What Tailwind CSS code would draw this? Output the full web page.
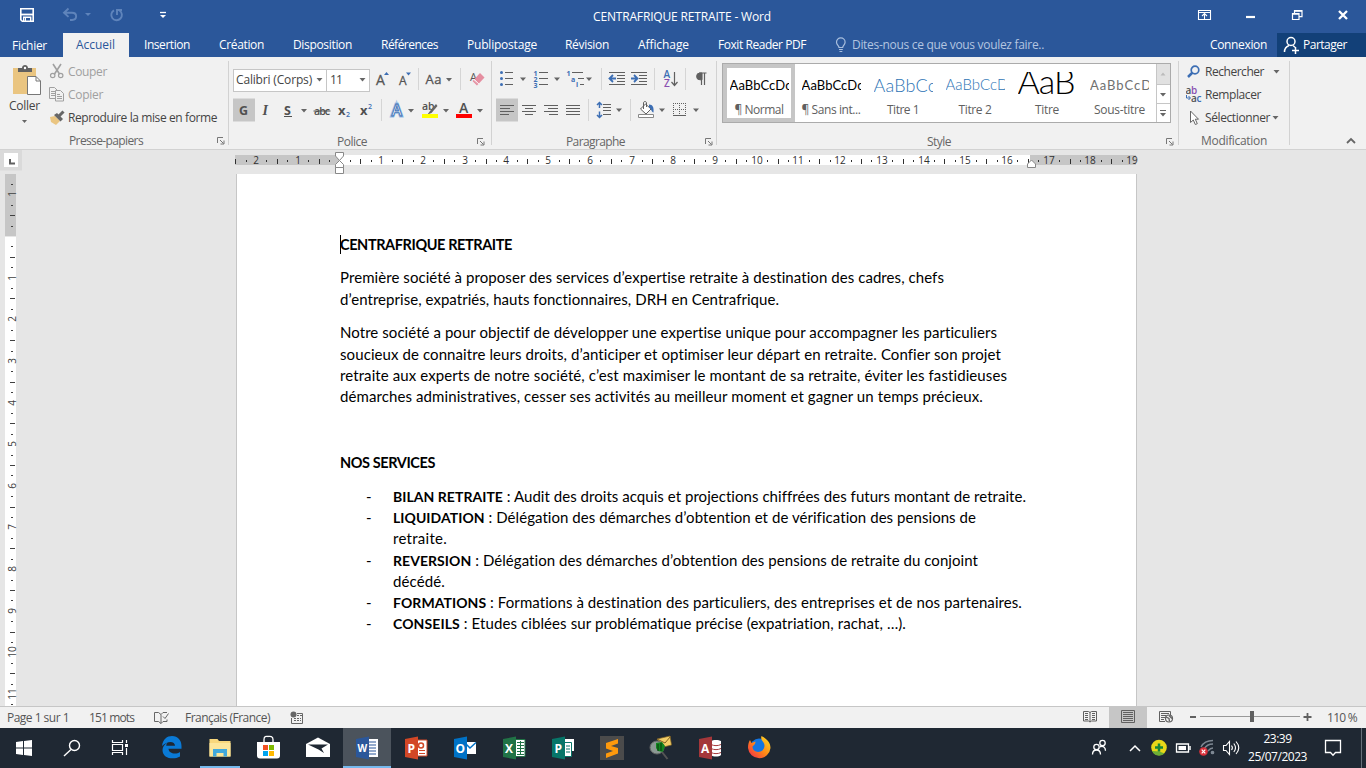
<!DOCTYPE html>
<html lang="fr">
<head>
<meta charset="utf-8">
<title>CENTRAFRIQUE RETRAITE - Word</title>
<script src="https://cdn.jsdelivr.net/npm/@tailwindcss/browser@4"></script>
</head>
<body class="w-[1366px] h-[768px] overflow-hidden flex flex-col bg-[#e6e6e6] font-['Open_Sans','Noto_Sans',sans-serif] text-[12px] leading-[16px] text-[#444444]">

<!-- Title bar -->
<header class="h-[33px] shrink-0 bg-[#2b579a] flex items-center text-white">
  <svg class="block shrink-0" width="593" height="33" viewBox="0 0 593 33" fill="none">
    <path d="M20.800 8.800h12.400v12.400h-10.900l-1.500-1.500z" stroke="#fff" stroke-width="1.600"/><path d="M21 14.500h12" stroke="#fff" stroke-width="1.800"/><path d="M23.700 21.500v-4.200h7v4.200" stroke="#fff" stroke-width="1.400"/><path d="M25.500 18v3.500" stroke="#fff"/>
    <g stroke="#5f84bb" stroke-width="1.900"><path d="M68.500 8.500l-4.500 4.200 4.500 4.200M64.500 12.700h7.500c5.500 0 5.500 7 0 7.300h-2"/><path d="M119.500 10.500a5.300 5.300 0 1 1-5.500-.2M117 15v-5h5"/></g>
    <path d="M85 13h6l-3 3z" fill="#5f84bb"/><path d="M160 12.500h6" stroke="#fff" stroke-width="1.300"/><path d="M160 15h6l-3 3z" fill="#fff"/>
  </svg>
  <span class="fit w-[178px] shrink-0 whitespace-nowrap">CENTRAFRIQUE RETRAITE - Word</span>
  <svg class="block shrink-0 ml-[419px]" width="176" height="33" viewBox="1190 0 176 33" fill="none" stroke="#fff">
    <path d="M1198.500 10.500h12v9h-12zM1198.500 12.500h12M1204.500 19v-5M1202 16l2.500-2.500L1207 16" stroke-width="1.100"/>
    <path d="M1246 17h9" stroke-width="2.200"/>
    <path d="M1292.500 13.500h6.500v6h-6.500zM1294.500 13v-2.300h7.500v6h-2.500" stroke-width="1.200"/><path d="M1292 14h7M1294 11h8" stroke-width="1.600"/>
    <path d="M1339 11l8 8M1347 11l-8 8" stroke-width="2.300"/>
  </svg>
</header>

<!-- Ribbon tabs -->
<nav class="h-[24px] shrink-0 bg-[#2b579a] flex items-center text-white whitespace-nowrap">
  <span class="fit ml-[12px] w-[35px] shrink-0 pt-[2px]">Fichier</span>
  <span class="ml-[16px] w-[66px] h-full shrink-0 bg-[#f1f1f1] flex items-center pl-[13px] text-[#2b579a]"><span class="fit w-[39px]">Accueil</span></span>
  <span class="fit ml-[15px] w-[46px] shrink-0">Insertion</span>
  <span class="fit ml-[29px] w-[45px] shrink-0">Création</span>
  <span class="fit ml-[29px] w-[59px] shrink-0">Disposition</span>
  <span class="fit ml-[29px] w-[57px] shrink-0">Références</span>
  <span class="fit ml-[29px] w-[70px] shrink-0">Publipostage</span>
  <span class="fit ml-[28px] w-[44px] shrink-0">Révision</span>
  <span class="fit ml-[29px] w-[51px] shrink-0">Affichage</span>
  <span class="fit ml-[29px] w-[88px] shrink-0">Foxit Reader PDF</span>
  <svg class="block shrink-0 ml-[29px]" width="12" height="16" viewBox="0 0 12 16" fill="none" stroke="#a9bfde" stroke-width="1.200"><path d="M4 10.500C4 8.500 1.500 8 1.500 5.200a4.300 4.300 0 0 1 8.600 0C10 8 7.700 8.500 7.700 10.500zM4 12.500h3.800M4.500 14.500h2.800"/></svg>
  <span class="fit ml-[5px] w-[192px] shrink-0 text-[#b3c5e0]">Dites-nous ce que vous voulez faire..</span>
  <span class="fit ml-[166px] w-[57px] shrink-0">Connexion</span>
  <span class="ml-[10px] w-[89px] h-full shrink-0 bg-[#124078] flex items-center">
    <svg class="block shrink-0 ml-[6px]" width="18" height="20" viewBox="1283 35 18 20" fill="none" stroke="#fff" stroke-width="1.500"><circle cx="1291" cy="41.500" r="4"/><path d="M1284.500 52c0-3.500 2-5.500 4.500-6.500M1293 45.500l2 1.700M1295.500 47v7M1292 50.500h7"/></svg>
    <span class="fit ml-[2px] w-[44px]">Partager</span>
  </span>
</nav>

<!-- Ribbon -->
<section class="h-[93px] shrink-0 bg-[#f1f1f1] border-b border-[#d2d2d2] flex whitespace-nowrap">

  <!-- Presse-papiers -->
  <div class="w-[228px] shrink-0 flex flex-col">
    <div class="h-[77px] flex">
      <div class="w-[49px] flex flex-col">
        <svg class="block" width="49" height="41" viewBox="0 57 49 41"><path d="M13 68h23v26H13z" fill="#eac581"/><path d="M18 72v-4h4c0-4 6-4 6 0h4v4z" fill="#606060"/><circle cx="25" cy="68" r="1.200" fill="#fff"/><path d="M27.500 76.500h8.500l4.500 4.500v13.500h-13z" fill="#fff" stroke="#777"/><path d="M36 76.500v4.500h4.500" fill="none" stroke="#777"/></svg>
        <span class="fit ml-[9px] w-[31px]">Coller</span>
        <svg class="block mt-[3px]" width="49" height="8" viewBox="0 0 49 8"><path d="M22 3h5l-2.500 3z" fill="#666"/></svg>
      </div>
      <div class="flex flex-col pt-[4px] text-[#a0a0a0]">
        <div class="h-[22px] flex items-center"><svg class="block mr-[3px]" width="16" height="18" viewBox="49 63 16 18" fill="none" stroke="#a0a0a0" stroke-width="1.600"><path d="M53 64l6.500 10M61 64l-6.500 10"/><circle cx="52.700" cy="75.500" r="2.200" stroke-width="1.200"/><circle cx="60.700" cy="75.500" r="2.200" stroke-width="1.200"/></svg><span class="fit w-[39px]">Couper</span></div>
        <div class="h-[24px] flex items-center"><svg class="block mr-[3px]" width="16" height="16" viewBox="49 87 16 16" fill="#f1f1f1" stroke="#a0a0a0"><path d="M49.500 87.500h5l2.500 2.500v8.500h-7.500zM51 91.500h4M51 93.500h4M51 95.500h4"/><path d="M55.500 90.500h5l3 3v7.500h-8zM57 94.500h3M57 96.500h5M57 98.500h5"/></svg><span class="fit w-[35px]">Copier</span></div>
        <div class="h-[22px] flex items-center text-[#444]"><svg class="block mr-[3px]" width="16" height="16" viewBox="49 110 16 16"><path d="M50 117l5-1 5 5-4 4-5-3z" fill="#eac581"/><path d="M54 115l3-2 6 6-2.500 2.500z" fill="#666"/><path d="M59 116l4.500-4.500" stroke="#666" stroke-width="3"/></svg><span class="fit w-[149px]">Reproduire la mise en forme</span></div>
      </div>
    </div>
    <div class="h-[16px] flex items-center text-[#666] pl-[69px]"><span class="fit w-[74px]">Presse-papiers</span>
      <svg class="block ml-[74px]" width="8" height="8" viewBox="0 0 8 8" fill="none" stroke="#777"><path d="M.5 6V.5H6M3 3l3.500 3.500M7 3.500V7H3.500"/></svg></div>
  </div>
  <div class="w-px h-[84px] mt-[4px] bg-[#d2d2d2] shrink-0"></div>

  <!-- Police -->
  <div class="w-[262px] shrink-0 flex flex-col pt-[11px]">
    <div class="h-[24px] flex items-center">
      <div class="ml-[4px] w-[94px] h-[23px] border border-[#c6c6c6] bg-white flex items-center pl-[2px]"><span class="fit w-[76px]">Calibri (Corps)</span><svg class="block ml-[4px]" width="7" height="4" viewBox="0 0 7 4"><path d="M.5 0h6l-3 3.500z" fill="#666"/></svg></div>
      <div class="w-[43px] h-[23px] border border-l-0 border-[#c6c6c6] bg-white flex items-center pl-[3px]"><span class="fit w-[12px]">11</span><svg class="block ml-[17px]" width="7" height="4" viewBox="0 0 7 4"><path d="M.5 0h6l-3 3.500z" fill="#666"/></svg></div>
      <svg class="block shrink-0" width="121" height="24" viewBox="370 68 121 24" font-family="Open Sans">
        <g fill="#555" stroke="#555" stroke-width=".3"><text x="376" y="85" font-size="14">A</text><text x="399" y="85" font-size="12">A</text><text x="425.500" y="84" font-size="13" textLength="16">Aa</text></g>
        <path d="M384 75h5l-2.500-3zM406 72.500h5l-2.500 3z" fill="#3c6eb4"/><path d="M446 78h6l-3 3.500z" fill="#666"/><path d="M418.500 68v22M460.500 68v22" stroke="#d5d5d5"/>
        <text x="470" y="81" font-size="11" fill="#555">A</text><path d="M474 79.500l6-6.500 4.500 4.500-6.500 7z" fill="#e58ea0"/><path d="M473 80.500l4.500 4.500" stroke="#e58ea0" stroke-width="1.500"/><path d="M474 79l5 5" stroke="#fff" stroke-width=".8"/>
      </svg>
    </div>
    <div class="h-[24px] mt-[6px] flex items-center">
      <svg class="block shrink-0 ml-[4px]" width="258" height="24" viewBox="233 98 258 24" font-family="Open Sans" fill="#505050">
        <path d="M233 98.500h22v23h-22z" fill="#c6c6c6"/>
        <text x="239" y="114.500" font-size="12.500" font-weight="700">G</text>
        <text x="262.500" y="115" font-size="14" font-style="italic" font-weight="700" font-family="Liberation Serif">I</text>
        <text x="284" y="114.500" font-size="12.500" font-weight="700">S</text><path d="M284 116.500h8" stroke="#505050"/>
        <path d="M301 109h6l-3 3.500zM408 109h6l-3 3.500zM443 109h6l-3 3.500zM477 109h6l-3 3.500z" fill="#666"/>
        <text x="314" y="114.500" font-size="10.500" font-weight="600" textLength="16">abc</text><path d="M313.500 111h17" stroke="#505050"/>
        <text x="338" y="114.500" font-size="13" font-weight="700">x</text><text x="346" y="117" font-size="7" fill="#3c6eb4" font-weight="600">2</text>
        <text x="360" y="114.500" font-size="13" font-weight="700">x</text><text x="368" y="109" font-size="7" fill="#3c6eb4" font-weight="600">2</text>
        <path d="M381.500 99v22" stroke="#d5d5d5"/>
        <text x="391.500" y="115.500" font-size="16" fill="#fff" stroke="#9ac0e6" stroke-width="3">A</text><text x="391.500" y="115.500" font-size="16" font-weight="600" fill="#fff" stroke="#3c6eb4" stroke-width=".9">A</text>
        <text x="422" y="110" font-size="10.500" font-weight="600">ab</text><path d="M436 104l-6 7-2.500 3.500 4-1.500 6-7z" fill="#666"/><path d="M422 114h16v4h-16z" fill="#ff0"/>
        <text x="459" y="112.500" font-size="14" font-weight="600">A</text><path d="M456 114h16v4h-16z" fill="#f00"/>
      </svg>
    </div>
    <div class="h-[16px] mt-[12px] flex items-center text-[#666] pl-[108px]"><span class="fit w-[30px]">Police</span>
      <svg class="block ml-[110px]" width="8" height="8" viewBox="0 0 8 8" fill="none" stroke="#777"><path d="M.5 6V.5H6M3 3l3.500 3.500M7 3.500V7H3.500"/></svg></div>
  </div>
  <div class="w-px h-[84px] mt-[4px] bg-[#d2d2d2] shrink-0"></div>

  <!-- Paragraphe -->
  <div class="w-[224px] shrink-0 flex flex-col pt-[11px]">
    <svg class="block shrink-0" width="224" height="24" viewBox="492 68 224 24" font-family="Open Sans" fill="none" stroke="#606060">
      <path d="M505 72.500h8M505 78.500h8M505 84.500h8M539 72.500h9M539 78.500h9M539 84.500h9M572 72.500h11M578 78.500h6M580 84.500h4"/>
      <g fill="#3c6eb4" stroke="none"><circle cx="501.500" cy="72.500" r="1.500"/><circle cx="501.500" cy="78.500" r="1.500"/><circle cx="501.500" cy="84.500" r="1.500"/>
      <g font-size="7" font-weight="700"><text x="533.500" y="75.500">1</text><text x="533.500" y="81.500">2</text><text x="533.500" y="87.500">3</text><text x="566.500" y="75.500">1</text><text x="571" y="81.500">a</text><text x="576" y="87">i</text></g></g>
      <path d="M520 77.500h6l-3 3.500zM554 77.500h6l-3 3.500zM586 77.500h6l-3 3.500z" fill="#666" stroke="none"/>
      <path d="M601.500 68v22M654.500 68v22M685.500 68v22" stroke="#d5d5d5"/>
      <path d="M609 72.500h16M617 75.500h8M617 78.500h8M617 81.500h8M609 84.500h16M631 72.500h16M639 75.500h8M639 78.500h8M639 81.500h8M631 84.500h16"/>
      <path d="M616 78.500h-6M613 75l-3.500 3.500 3.500 3.500M631 78.500h6M634 75l3.500 3.500-3.500 3.500" stroke="#3c6eb4" stroke-width="1.800"/>
      <g stroke="none" font-size="10" font-weight="600"><text x="663.500" y="77.500" fill="#3c6eb4">A</text><text x="664" y="86.500" fill="#8a4fb0">Z</text></g><path d="M674.500 72v13M671.500 82l3 3.500 3-3.500" stroke-width="1.200"/>
      <path d="M702 73h-2a3.300 3.300 0 0 0 0 6.800h2z" fill="#606060"/><path d="M701.500 73v12M704.500 73v12M699 73h7.500" stroke-width="1.200"/>
    </svg>
    <svg class="block shrink-0 mt-[6px]" width="224" height="24" viewBox="492 98 224 24" fill="none" stroke="#606060">
      <path d="M496 98.500h22v23h-22z" fill="#c6c6c6" stroke="none"/>
      <path d="M500 105.500h14M500 108.500h10M500 111.500h14M500 114.500h9M522 105.500h14M525 108.500h8M522 111.500h14M525 114.500h8M544 105.500h14M548 108.500h10M544 111.500h14M549 114.500h9M566 105.500h14M566 108.500h14M566 111.500h14M566 114.500h14M603 104.500h8M603 107.500h8M603 110.500h8M603 114.500h8"/>
      <path d="M588.500 99v22M630.500 99v22" stroke="#d5d5d5"/>
      <path d="M599.500 102.500v5.500M597 105l2.500-2.500 2.500 2.500M599.500 111.500v6M597 115l2.500 2.500 2.500-2.500" stroke="#3c6eb4" stroke-width="1.500"/>
      <path d="M616 108.500h6l-3 3.500zM659 108.500h6l-3 3.500zM693 108.500h6l-3 3.500z" fill="#666" stroke="none"/>
      <path d="M640.500 109l5-5 5.500 5-5 5z" fill="#fff"/><path d="M643.500 109v-6c0-2 3-2 3 0v4"/><path d="M649 104.500c4 0 5 3 4.500 8-2 0-2-4-4.500-5z" fill="#3c6eb4" stroke="none"/><path d="M638.500 114.500h15v3h-15z" fill="#fff" stroke="#888"/>
      <path d="M673.500 103v13M679.500 103v13M685.500 103v13M673 103.500h13M673 109.500h13" stroke-dasharray="1 1"/><path d="M673 115.500h13"/>
    </svg>
    <div class="h-[16px] mt-[12px] flex items-center text-[#666] pl-[74px]"><span class="fit w-[59px]">Paragraphe</span>
      <svg class="block ml-[80px]" width="8" height="8" viewBox="0 0 8 8" fill="none" stroke="#777"><path d="M.5 6V.5H6M3 3l3.500 3.500M7 3.500V7H3.500"/></svg></div>
  </div>
  <div class="w-px h-[84px] mt-[4px] bg-[#d2d2d2] shrink-0"></div>

  <!-- Style -->
  <div class="w-[461px] shrink-0 flex flex-col pt-[6px]">
    <div class="ml-[5px] w-[449px] h-[60px] border border-[#ababab] bg-white flex text-[#606060]">
      <div class="w-[72px] shrink-0 border-4 border-[#c6c6c6] flex flex-col items-center pt-[7px]"><div class="w-[59px] h-[20px] overflow-hidden text-black font-['Lato'] text-[13px] leading-[20px]"><span class="fit block w-[62px]">AaBbCcDc</span></div><span class="fit w-[49px] mt-[7px]">¶ Normal</span></div>
      <div class="w-[72px] shrink-0 flex flex-col items-center pt-[11px]"><div class="w-[59px] h-[20px] overflow-hidden text-black font-['Lato'] text-[13px] leading-[20px]"><span class="fit block w-[62px]">AaBbCcDc</span></div><span class="fit w-[59px] mt-[7px]">¶ Sans int...</span></div>
      <div class="w-[72px] shrink-0 flex flex-col items-center pt-[10px]"><div class="w-[59px] h-[21px] overflow-hidden text-[#2e74b5] font-['Lato'] font-light text-[18px] leading-[23px]"><span class="fit block w-[63px]">AaBbCc</span></div><span class="fit w-[32px] mt-[7px]">Titre 1</span></div>
      <div class="w-[72px] shrink-0 flex flex-col items-center pt-[10px]"><div class="w-[59px] h-[21px] overflow-hidden text-[#2e74b5] font-['Lato'] font-light text-[15px] leading-[21px]"><span class="fit block w-[63px]">AaBbCcD</span></div><span class="fit w-[33px] mt-[7px]">Titre 2</span></div>
      <div class="w-[72px] shrink-0 flex flex-col items-center pt-[8px]"><div class="w-[59px] h-[23px] overflow-hidden text-black font-['Lato'] font-light text-[34px] leading-[18px]"><span class="fit block w-[57px]">AaB</span></div><span class="fit w-[24px] mt-[7px]">Titre</span></div>
      <div class="w-[73px] shrink-0 flex flex-col items-center pt-[11px]"><div class="w-[59px] h-[20px] overflow-hidden text-[#707070] font-['Lato'] text-[13px] leading-[20px]"><span class="fit block w-[62px]">AaBbCcD</span></div><span class="fit w-[51px] mt-[7px]">Sous-titre</span></div>
      <svg class="block shrink-0" width="14" height="58" viewBox="0 0 14 58"><path d="M0 0h14v20H0z" fill="#e1e1e1"/><path d="M.5 0v58M0 20.500h14M0 39.500h14" stroke="#c6c6c6"/><path d="M4.500 11.500h5L7 8.500z" fill="#bbb"/><path d="M4 29h6l-3 3.500zM4 49h6l-3 3.500z" fill="#666"/><path d="M4 46.500h6" stroke="#666"/></svg>
    </div>
    <div class="h-[16px] mt-[11px] flex items-center text-[#666] pl-[210px]"><span class="fit w-[24px]">Style</span>
      <svg class="block ml-[215px]" width="8" height="8" viewBox="0 0 8 8" fill="none" stroke="#777"><path d="M.5 6V.5H6M3 3l3.500 3.500M7 3.500V7H3.500"/></svg></div>
  </div>
  <div class="w-px h-[84px] mt-[4px] bg-[#d2d2d2] shrink-0"></div>

  <!-- Modification -->
  <div class="w-[110px] shrink-0 flex flex-col pt-[4px]">
    <div class="h-[23px] flex items-center pl-[7px]"><svg class="block mr-[2px]" width="17" height="16" viewBox="0 0 17 16" fill="none" stroke="#3c6eb4"><circle cx="9" cy="6" r="3.800" stroke-width="1.700"/><path d="M6.500 8.500l-4.500 4.500" stroke-width="2.500"/></svg><span class="fit w-[59px]">Rechercher</span><svg class="block ml-[9px]" width="7" height="4" viewBox="0 0 7 4"><path d="M.5 0h6l-3 3.500z" fill="#666"/></svg></div>
    <div class="h-[23px] flex items-center pl-[7px]"><svg class="block mr-[2px]" width="17" height="18" viewBox="1186 86 17 18" font-family="Open Sans" font-weight="600" font-size="10"><text x="1185.500" y="93.500" fill="#505050">a</text><text x="1191" y="93.500" fill="#8a4fb0">b</text><text x="1191" y="101.500" fill="#505050">a</text><text x="1196.500" y="101.500" fill="#3c6eb4">c</text><path d="M1186.500 95v3h3.500M1188.500 96l2 2-2 2" fill="none" stroke="#3c6eb4"/></svg><span class="fit w-[56px]">Remplacer</span></div>
    <div class="h-[23px] flex items-center pl-[7px]"><svg class="block mr-[2px]" width="17" height="18" viewBox="0 0 17 18" fill="#fff" stroke="#666"><path d="M4.500 2v11.500l2.800-2.500 2 4.500 2-.8-2-4.500h3.200z"/></svg><span class="fit w-[65px]">Sélectionner</span><svg class="block ml-[2px]" width="7" height="4" viewBox="0 0 7 4"><path d="M.5 0h6l-3 3.500z" fill="#666"/></svg></div>
    <div class="h-[16px] mt-[4px] flex items-center text-[#666] pl-[22px]"><span class="fit w-[66px]">Modification</span></div>
  </div>
  <div class="w-px h-[84px] mt-[4px] bg-[#d2d2d2] shrink-0"></div>
  <div class="flex-1 flex items-end justify-end pr-[10px] pb-[4px]"><svg class="block" width="10" height="8" viewBox="0 0 10 8" fill="none" stroke="#666" stroke-width="1.800"><path d="M1 6l4-4 4 4"/></svg></div>
</section>

<!-- Rulers and page -->
<main class="h-[556px] shrink-0 flex">
  <div class="w-[236px] shrink-0 flex flex-col">
    <svg class="block shrink-0" width="236" height="24" viewBox="0 150 236 24"><path d="M0 150h22v20.500H0z" fill="#dadada"/><path d="M4 153h14v14H4z" fill="#fff"/><path d="M10 159v4.500h5" fill="none" stroke="#606060" stroke-width="2"/></svg>
    <svg id="vruler" class="block shrink-0 overflow-hidden" width="22" height="532" viewBox="0 174 22 532" font-family="Open Sans" font-size="10" fill="#404040"><path d="M5 174h11v62H5z" fill="#c6c6c6"/><path d="M5 237h11v469H5z" fill="#fff"/></svg>
  </div>
  <div class="w-[901px] shrink-0 flex flex-col">
    <svg id="hruler" class="block shrink-0 overflow-visible" width="901" height="24" viewBox="236 150 901 24" font-family="Open Sans" font-size="10" fill="#303030"><path d="M235 155h801v10H235zM1031 155h105v10h-105z" fill="#c6c6c6"/><path d="M339 155h691v10H339z" fill="#fff"/></svg>
    <article class="h-[532px] bg-white border-x border-[#c6c6c6] pl-[103px] pt-[60px] flex flex-col font-['Lato',sans-serif] text-[15px] leading-[21.400px] text-black whitespace-nowrap">
      <div class="flex relative"><i class="absolute left-0 top-[1px] w-px h-[19px] bg-black"></i><b class="fit w-[172px] text-[14.500px]">CENTRAFRIQUE RETRAITE</b></div>
      <p class="mt-[12px]"><span class="fit block w-[604px]">Première société à proposer des services d’expertise retraite à destination des cadres, chefs</span><span class="fit block w-[439px]">d’entreprise, expatriés, hauts fonctionnaires, DRH en Centrafrique.</span></p>
      <p class="mt-[12px]"><span class="fit block w-[657px]">Notre société a pour objectif de développer une expertise unique pour accompagner les particuliers</span><span class="fit block w-[661px]">soucieux de connaitre leurs droits, d’anticiper et optimiser leur départ en retraite. Confier son projet</span><span class="fit block w-[667px]">retraite aux experts de notre société, c’est maximiser le montant de sa retraite, éviter les fastidieuses</span><span class="fit block w-[643px]">démarches administratives, cesser ses activités au meilleur moment et gagner un temps précieux.</span></p>
      <b class="fit block w-[95px] mt-[44.300px] text-[14.500px]">NOS SERVICES</b>
      <ul class="mt-[12.500px] leading-[21.200px]">
        <li class="flex"><span class="w-[53px] pl-[26px]">-</span><span class="fit block w-[633px]"><b class="text-[14px]">BILAN RETRAITE</b> : Audit des droits acquis et projections chiffrées des futurs montant de retraite.</span></li>
        <li class="flex"><span class="w-[53px] pl-[26px]">-</span><div><span class="fit block w-[583px]"><b class="text-[14px]">LIQUIDATION</b> : Délégation des démarches d’obtention et de vérification des pensions de</span><span class="fit block w-[54px]">retraite.</span></div></li>
        <li class="flex"><span class="w-[53px] pl-[26px]">-</span><div><span class="fit block w-[585px]"><b class="text-[14px]">REVERSION</b> : Délégation des démarches d’obtention des pensions de retraite du conjoint</span><span class="fit block w-[52px]">décédé.</span></div></li>
        <li class="flex"><span class="w-[53px] pl-[26px]">-</span><span class="fit block w-[629px]"><b class="text-[14px]">FORMATIONS</b> : Formations à destination des particuliers, des entreprises et de nos partenaires.</span></li>
        <li class="flex"><span class="w-[53px] pl-[26px]">-</span><span class="fit block w-[513px]"><b class="text-[14px]">CONSEILS</b> : Etudes ciblées sur problématique précise (expatriation, rachat, …).</span></li>
      </ul>
    </article>
  </div>
</main>

<!-- Status bar -->
<footer class="h-[22px] shrink-0 bg-[#f1f1f1] border-t border-[#c6c6c6] flex items-center whitespace-nowrap text-[#555]">
  <span class="fit ml-[7px] w-[62px] shrink-0">Page 1 sur 1</span>
  <span class="fit ml-[20px] w-[45px] shrink-0">151 mots</span>
  <svg class="block shrink-0 ml-[20px]" width="15" height="14" viewBox="0 0 15 14" fill="none" stroke="#666"><path d="M.5 1.500h4l2.500 2 2-2h4M.5 1.500v9h4l2.500 2 2-2h4v-2M7 3.500v9M9 5.500l2 2 3.500-5"/></svg>
  <span class="fit ml-[16px] w-[85px] shrink-0">Français (France)</span>
  <svg class="block shrink-0 ml-[20px]" width="14" height="14" viewBox="0 0 14 14" fill="none" stroke="#666"><path d="M7 2.500h5.500v10h-11V7"/><circle cx="3.500" cy="3.500" r="3" fill="#666" stroke="none"/><path d="M7 4.500h5M4 7.500h7M4 9.500h7" stroke-dasharray="2 1"/></svg>
  <svg class="block shrink-0 ml-[763px]" width="261" height="21" viewBox="1067 707 261 21" fill="none" stroke="#606060">
    <path d="M1109 707h38v21h-38z" fill="#c6c6c6" stroke="none"/>
    <path d="M1083.500 711.500h5l1.500 1 1.500-1h5v9.500h-5l-1.500 1-1.500-1h-5zM1090 712v10M1085 713.500h3M1085 715.500h3M1085 717.500h3M1085 719.500h3M1092 713.500h3M1092 715.500h3M1092 717.500h3M1092 719.500h3"/>
    <path d="M1121.500 710.500h13v12h-13zM1123 712.500h10M1123 714.500h10M1123 716.500h10M1123 718.500h10M1123 720.500h10"/>
    <path d="M1165 721.500h-5.500v-10h11v4M1161 713.500h8M1161 715.500h5M1161 717.500h4M1161 719.500h3"/><circle cx="1169" cy="718.500" r="3.500" fill="#f1f1f1" stroke-width="1.200"/><path d="M1166 717l3 1.500.5 3M1169 715.500l3 3" stroke-width="1.300"/>
    <path d="M1190 717h6M1303.500 717h8M1307.500 713v8" stroke-width="1.800"/><path d="M1200 716.500h100" stroke="#999"/><path d="M1250 711h4v11h-4z" fill="#606060" stroke="none"/>
  </svg>
  <span class="fit w-[30px] shrink-0 ml-[-1px]">110 %</span>
</footer>

<!-- Taskbar -->
<div class="h-[40px] shrink-0 bg-[#1f2833] flex items-center text-white whitespace-nowrap">
  <svg class="block shrink-0" width="48" height="40" viewBox="0 728 48 40" fill="#fff"><path d="M16 742l7-1v6.500h-7zM24 741l8-1v7.500h-8zM16 748.500h7v6.500l-7-1zM24 748.500h8v7.500l-8-1z"/></svg>
  <svg class="block shrink-0" width="48" height="40" viewBox="48 728 48 40" fill="none" stroke="#fff" stroke-width="1.400"><circle cx="74.500" cy="745.500" r="5"/><path d="M71 749.500l-7 6.500"/></svg>
  <svg class="block shrink-0" width="51" height="40" viewBox="96 728 51 40" fill="none" stroke="#fff" stroke-width="1.200"><path d="M112.500 740v2.500h10V740M112.500 755v-2.500h10v2.500M112.500 744.500h10v6h-10zM126.500 740v3M126.500 748v7"/><path d="M125 744h3v3h-3z" fill="#fff" stroke="none"/></svg>
  <svg class="block shrink-0" width="49" height="40" viewBox="147 728 49 40"><path d="M162 746c1-7 5-10 10-10 6 0 9.500 4.500 9.500 10v2.800H168.500c.2 5 7.500 6 11.500 3.200v4.500c-6 3.500-17.500 2.500-17.500-6.500 0-3 2-6 5-7.500-.8 1-1.200 2-1.300 3.300h8.800c0-5-7.500-5.500-13 .2z" fill="#0a7ad6"/></svg>
  <svg class="block shrink-0" width="49" height="40" viewBox="196 728 49 40"><path d="M209.500 739h8l1.500 2h11.500v15.500h-21z" fill="#f8d77c"/><path d="M209.500 743h21v13.500h-21z" fill="#fde69b"/><path d="M213 756.500V749h14v7.500h-3.500V753h-7v3.500z" fill="#42a9dc"/><path d="M200 766h40v2h-40z" fill="#76b9ed"/></svg>
  <svg class="block shrink-0" width="49" height="40" viewBox="245 728 49 40"><path d="M264 742v-2.500c0-4 3-3 4-3s5-1 5 3v2.500" fill="none" stroke="#fff" stroke-width="1.300"/><path d="M257 742h23v13.500q0 3-3 3h-17q-3 0-3-3z" fill="#fff"/><path d="M263 745h5v5h-5z" fill="#f25022"/><path d="M269 745h5v5h-5z" fill="#7fba00"/><path d="M263 751h5v5h-5z" fill="#00a4ef"/><path d="M269 751h5v5h-5z" fill="#ffb900"/></svg>
  <svg class="block shrink-0" width="49" height="40" viewBox="294 728 49 40"><path d="M306 744l12-6.500 12 6.500v13h-24z" fill="#fff"/><path d="M308 744.500h20l-6.500 4 2.500 4.500-5.500-3.500z" fill="#1f2833"/></svg>
  <svg class="block shrink-0" width="48" height="40" viewBox="343 728 48 40"><path d="M343 728h48v40h-48z" fill="#4b535c"/><path d="M343 766h48v2h-48z" fill="#76b9ed"/><path d="M366 739h12v18h-12z" fill="#fff"/><path d="M368 742h8M368 745h8M368 748h8M368 751h8M368 754h8" stroke="#2b579a" stroke-width="1.200"/><path d="M356 739l13-2.500v23L356 757z" fill="#2b579a"/><text x="357.500" y="752" font-family="Open Sans" font-size="10" font-weight="700" fill="#fff">W</text></svg>
  <svg class="block shrink-0" width="49" height="40" viewBox="391 728 49 40"><path d="M415 740h12v16h-12z" fill="#fff" stroke="#d24726"/><circle cx="421" cy="745.500" r="2.500" fill="none" stroke="#d24726" stroke-width="1.500"/><path d="M419 750.500h6M419 753.500h6" stroke="#d24726"/><path d="M405 739l13-2.500v23L405 757z" fill="#d24726"/><text x="407.500" y="752.500" font-family="Open Sans" font-size="12" font-weight="700" fill="#fff">P</text></svg>
  <svg class="block shrink-0" width="49" height="40" viewBox="440 728 49 40"><path d="M464 742h12v12h-12z" fill="#fff"/><path d="M466 744l4 4 6-5.500" fill="none" stroke="#0072c6" stroke-width="1.500"/><path d="M454 739l13-2.500v23L454 757z" fill="#0072c6"/><text x="455.500" y="752.500" font-family="Open Sans" font-size="12" font-weight="700" fill="#fff">O</text></svg>
  <svg class="block shrink-0" width="49" height="40" viewBox="489 728 49 40"><path d="M513 739.500h12v17h-12z" fill="#fff" stroke="#217346"/><path d="M517 742.500h7M517 745.500h7M517 748.500h7M517 751.500h7M517 754.500h7M520.500 741v14" stroke="#217346"/><path d="M503 739l13-2.500v23L503 757z" fill="#217346"/><text x="505" y="752.500" font-family="Open Sans" font-size="12" font-weight="700" fill="#fff">X</text></svg>
  <svg class="block shrink-0" width="49" height="40" viewBox="538 728 49 40"><path d="M564 739h10v12h-10z" fill="#fff"/><path d="M562.500 742.500h9v14h-9z" fill="#fff" stroke="#077568"/><path d="M566 746h4M566 749h4M566 752h4" stroke="#077568"/><path d="M552 739l13-2.500v23L552 757z" fill="#077568"/><text x="554.500" y="752.500" font-family="Open Sans" font-size="12" font-weight="700" fill="#fff">P</text></svg>
  <svg class="block shrink-0" width="49" height="40" viewBox="587 728 49 40"><path d="M600 736h24v24h-24z" fill="#4b4b4b"/><path d="M606 743l12-4v4.500l-7 2.500 7 2v5.500l-12 4.500v-4.500l7-2.500-7-2.500z" fill="#ff9a0c"/></svg>
  <svg class="block shrink-0" width="49" height="40" viewBox="636 728 49 40"><path d="M657 739l13-3 1.500 9-8 2z" fill="#f2ce68" stroke="#806020" stroke-width=".7"/><path d="M658 739.500l7 3.500 5.500-6.500" fill="none" stroke="#806020"/><ellipse cx="657" cy="747.500" rx="7" ry="6.500" fill="#8c9994" stroke="#666"/><path d="M656 743l6-1 3 4-2 6-5-1-2-3z" fill="#12851f"/><path d="M658 744v7M661 743v8" stroke="#063b0b"/><path d="M662 752l5.500 7" stroke="#555" stroke-width="2"/></svg>
  <svg class="block shrink-0" width="49" height="40" viewBox="685 728 49 40"><path d="M711 741c2-1.500 8-1.500 10 0v14c-2 2-8 2-10 0z" fill="#fff"/><path d="M711 744.500c3 1.500 7 1.500 10 0M711 748.500c3 1.500 7 1.500 10 0M711 752.500c3 1.500 7 1.500 10 0" fill="none" stroke="#a4373a"/><path d="M699 739l13-2.500v23L699 757z" fill="#a4373a"/><text x="701" y="752.500" font-family="Open Sans" font-size="12" font-weight="700" fill="#fff">A</text></svg>
  <svg class="block shrink-0" width="49" height="40" viewBox="734 728 49 40"><defs><linearGradient id="ff" x1="1" y1="0" x2="0" y2="1"><stop offset="0" stop-color="#ffe226"/><stop offset=".5" stop-color="#ff8a16"/><stop offset="1" stop-color="#f0224f"/></linearGradient></defs><circle cx="759" cy="747.500" r="9" fill="#1475e0"/><path d="M750 740l1.500 3 4-1.500c0 3-1.500 3.500-3 5 0 4 4 6.500 8 5s5-6 3-9c-1.500-2-3-3.500-2-6.500 5 3 9 6 9 12a11.300 11.300 0 0 1-22.500 0c0-3 .5-6 2-8z" fill="url(#ff)"/></svg>
  <svg class="block shrink-0 ml-[302px]" width="160" height="40" viewBox="1085 728 160 40" fill="none" stroke="#fff" stroke-width="1.300">
    <circle cx="1102.500" cy="743" r="2.700"/><circle cx="1096.500" cy="747" r="2.700"/><path d="M1092.500 754.500c0-6 8-6 8 0M1100 746.800c3-1.500 5.500.5 5.500 4"/>
    <path d="M1130 751l5-5 5 5" stroke-width="1.500"/>
    <circle cx="1159" cy="747.500" r="7.800" fill="#e9d718" stroke="none"/><path d="M1152 751a7.800 7.800 0 0 0 12.500 2.500l-5-2z" fill="#6cae35" stroke="none"/><path d="M1159 743.500v8M1155 747.500h8" stroke="#168438" stroke-width="2.500"/>
    <path d="M1176.500 744h12v8h-12z"/><path d="M1178.500 746h7.500v4h-7.500z" fill="#fff" stroke="none"/><path d="M1190 746v4" stroke-width="1.500"/>
    <g stroke="#7e8893"><path d="M1201 747c2-4 7-6.500 12-6.500M1204 749c2-3.500 5-5 9-5M1208 751c1.500-2 3-3 5-3"/><circle cx="1212.500" cy="752.500" r="1.200" fill="#7e8893"/></g><circle cx="1203.500" cy="751.500" r="4.300" fill="#d9303a" stroke="none"/><path d="M1201.700 749.700l3.600 3.600M1205.300 749.700l-3.600 3.600" stroke-width="1.200"/>
    <path d="M1223.500 745.500h2.500l3.500-4v13l-3.500-4h-2.500zM1231.500 745.500c1.200 1.500 1.200 3 0 4.500M1233.800 743.500c2.200 3 2.200 6 0 8.500M1236 741.500c3.500 4 3.500 8.500 0 12.500" stroke-width="1.100"/>
  </svg>
  <div class="ml-[3px] w-[59px] shrink-0 flex flex-col items-center leading-[18px]"><span class="fit w-[28px]">23:39</span><span class="fit w-[59px]">25/07/2023</span></div>
  <svg class="block shrink-0 ml-[17px]" width="42" height="40" viewBox="1324 728 42 40" fill="none" stroke="#fff" stroke-width="1.300"><path d="M1325.500 740.500h15v12h-5l-2.500 2.800-2.500-2.800h-5z"/><path d="M1361.500 728v40" stroke="#66707a" stroke-width="1"/></svg>
</div>

<script>
// Justify every fixed-width label to its box by adjusting the tracking.
function justifyLabels() {
  document.querySelectorAll('.fit').forEach(el => {
    el.style.whiteSpace = 'nowrap';
    el.style.fontVariantLigatures = 'none';
    el.style.letterSpacing = '0px';
    const target = Number(/(?:^|\s)w-\[(\d+)px\]/.exec(el.className)[1]);
    const r = document.createRange();
    r.selectNodeContents(el);
    const natural = r.getBoundingClientRect().width;
    el.style.letterSpacing = ((target - natural) / el.textContent.length).toFixed(4) + 'px';
  });
}
justifyLabels();
window.addEventListener('load', justifyLabels);

// Ruler graduations: one unit is a centimetre at 110 % zoom.
const NS = 'http://www.w3.org/2000/svg';
function add(svg, name, attrs, text) {
  const n = document.createElementNS(NS, name);
  for (const k in attrs) n.setAttribute(k, attrs[k]);
  if (text !== undefined) n.textContent = text;
  svg.appendChild(n);
  return n;
}
const h = document.getElementById('hruler'), v = document.getElementById('vruler');
for (let q = -10; q <= 76; q++) {
  const x = Math.round(339.5 + q * 10.43);
  if (q % 4 === 0) { if (q) add(h, 'text', { x: x, y: 164, 'text-anchor': 'middle' }, Math.abs(q / 4)); }
  else if (q % 2 === 0) add(h, 'rect', { x: x, y: 159, width: 1, height: 5 });
  else add(h, 'rect', { x: x, y: 160, width: 1, height: 2 });
}
for (let q = -5; q <= 45; q++) {
  const y = Math.round(236 + q * 10.41);
  if (q % 4 === 0) { if (q) add(v, 'text', { x: 0, y: 0, 'text-anchor': 'middle', transform: 'translate(15.5 ' + y + ') rotate(-90)' }, Math.abs(q / 4)); }
  else if (q % 2 === 0) add(v, 'rect', { x: 10, y: y, width: 5, height: 1 });
  else add(v, 'rect', { x: 11, y: y, width: 2, height: 1 });
}
add(h, 'path', { d: 'M335.500 152.500h8v3.500l-4 4.500-4-4.500zM339.500 160.500l4 4v3h-8v-3zM335.500 167.500h8v6h-8zM1027.500 167.500v-3.500l4-4 4 4v3.500z', fill: '#fff', stroke: '#888' });
</script>
</body>
</html>
